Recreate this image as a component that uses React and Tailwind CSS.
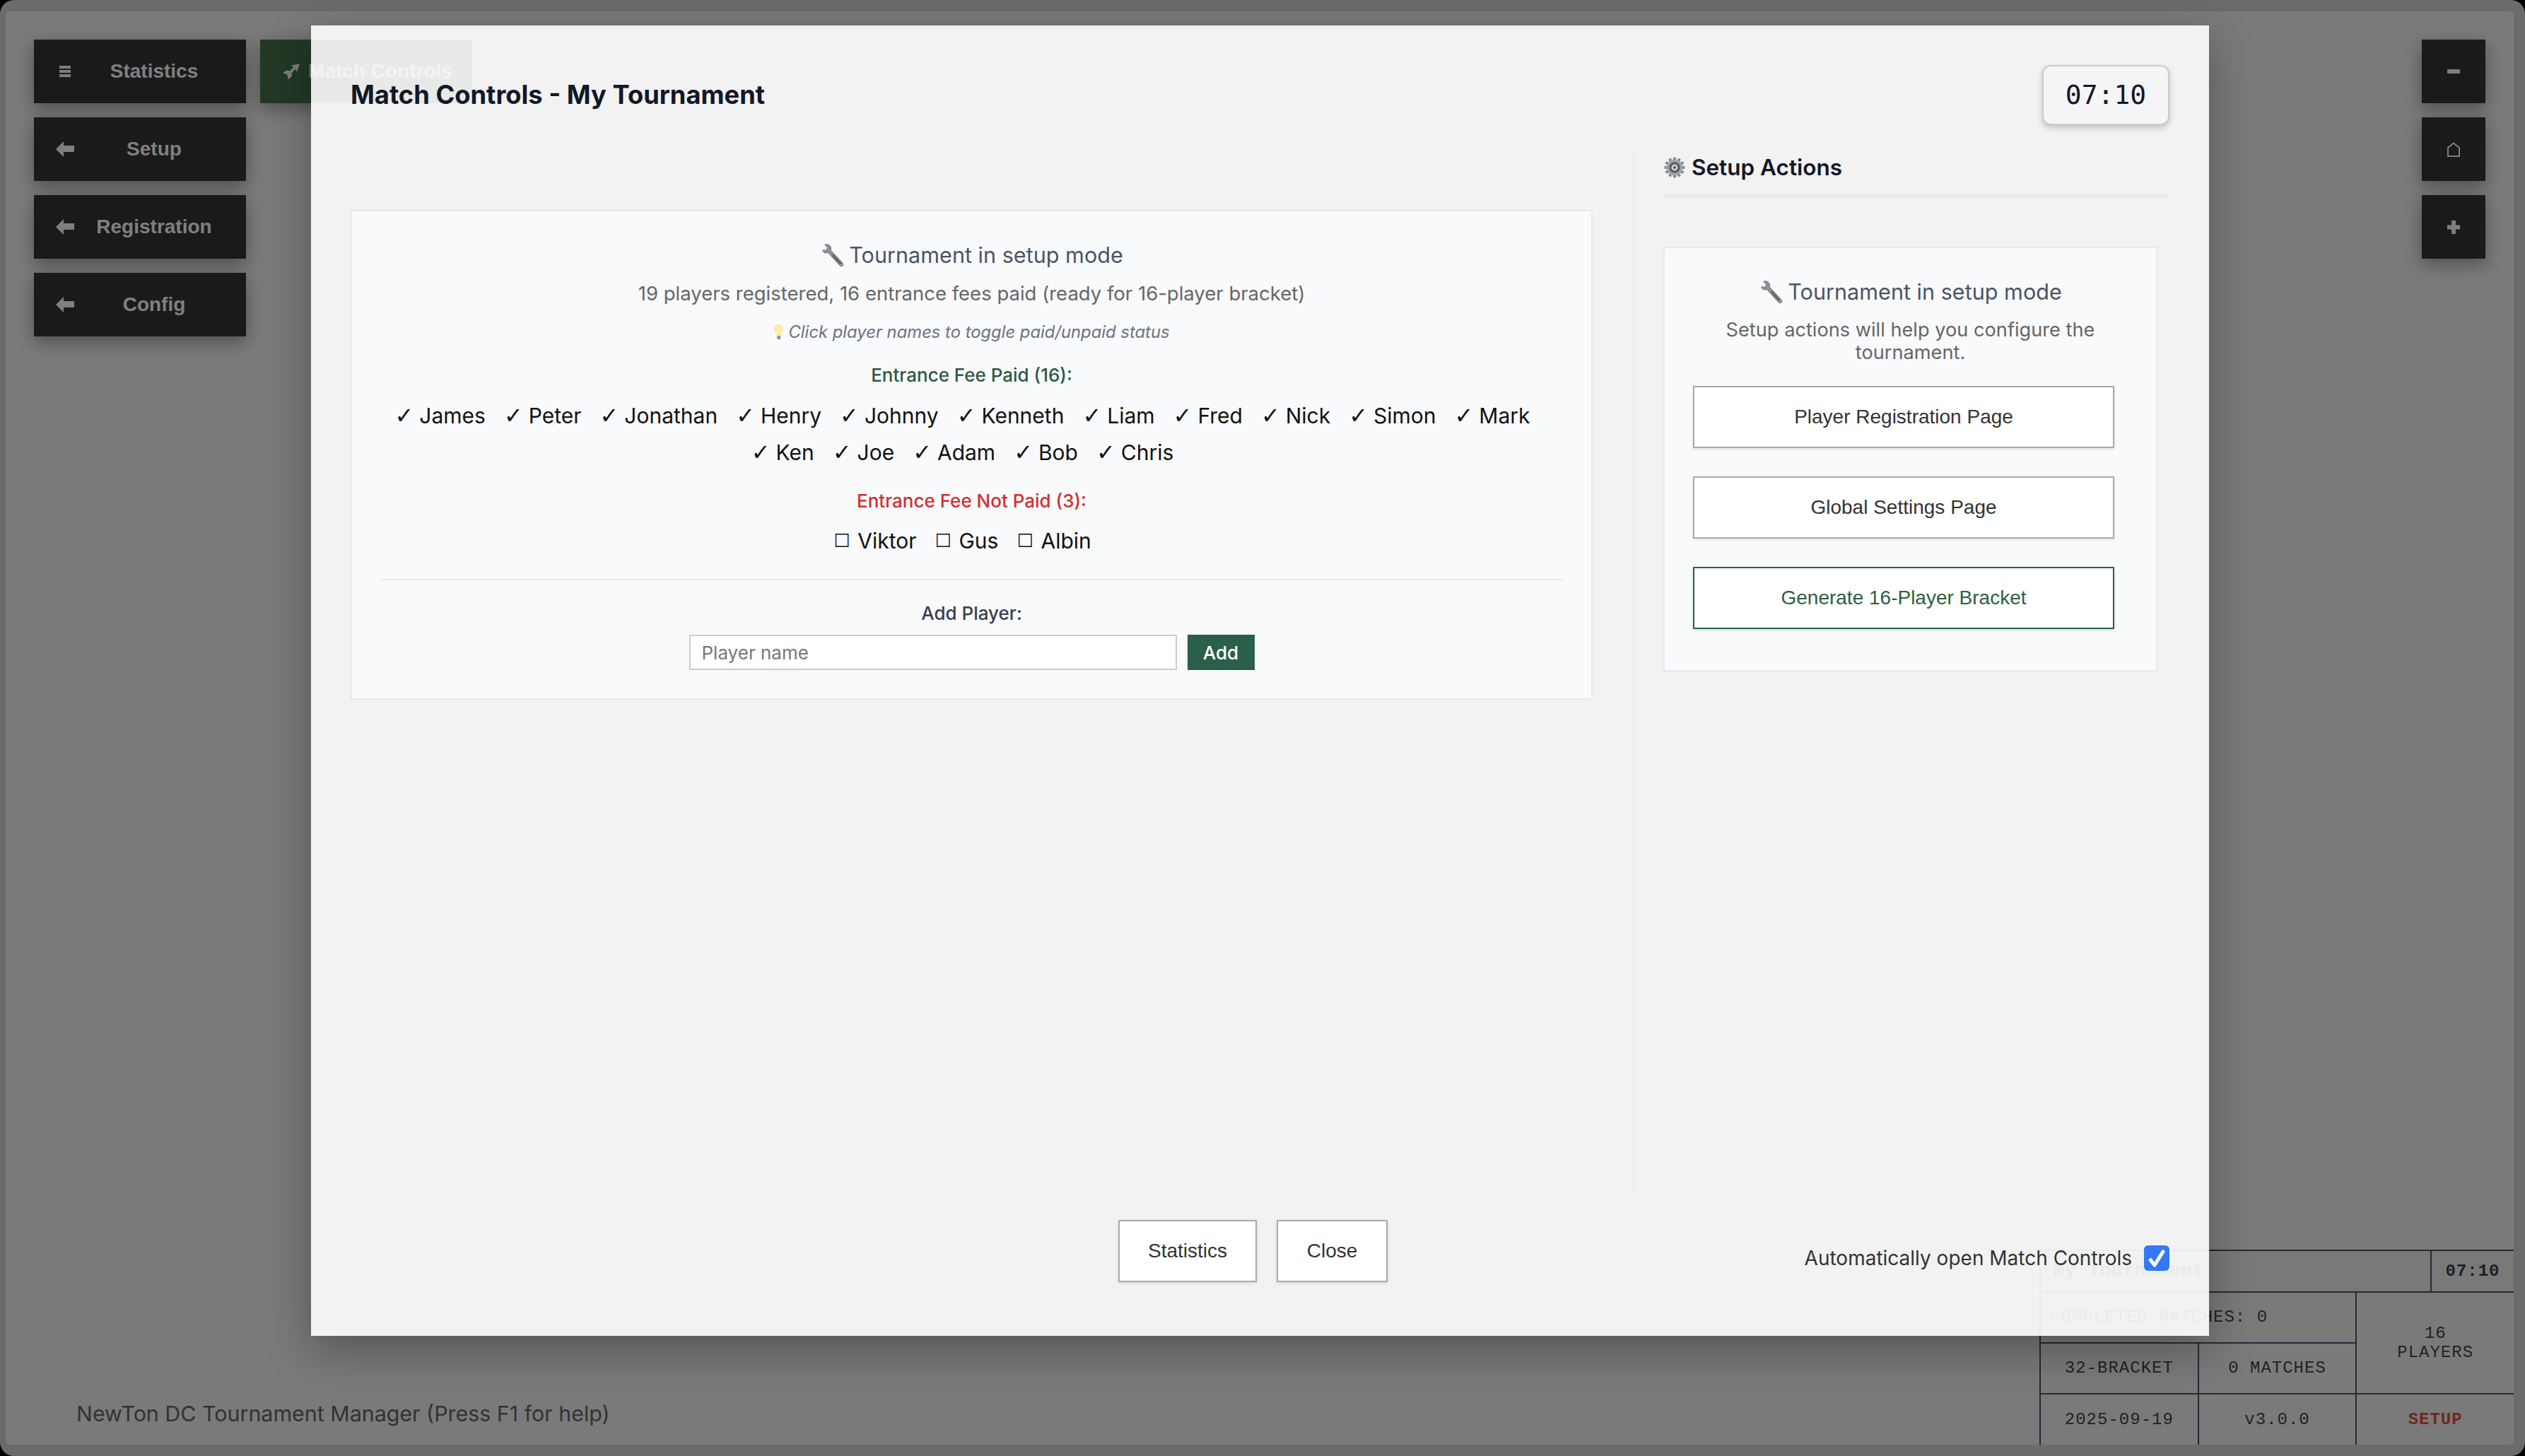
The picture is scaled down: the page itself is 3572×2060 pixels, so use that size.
import React from "react";

const paid = ["James","Peter","Jonathan","Henry","Johnny","Kenneth","Liam","Fred","Nick","Simon","Mark","Ken","Joe","Adam","Bob","Chris"];
const unpaid = ["Viktor","Gus","Albin"];

function Wrench({ className }) {
  return (
    <svg viewBox="0 0 32 32" className={className}>
      <path d="M3.5 9.5 L8 10 L9.5 6.5 L6 3 C9 1.6 12.6 3 13.6 6 C14 7.6 13.8 8.6 13.4 9.6 L28.6 26 C29.6 27.2 29.4 28.6 28.4 29.5 C27.4 30.3 26 30.2 25 29.2 L10 12.8 C8.6 13.4 7 13.4 5.6 12.8 C4 12 3.2 10.8 3.5 9.5 Z" fill="#8d9096" stroke="#6b6e74" strokeWidth="0.8" />
      <path d="M17 15 L28 27 C28.8 28 28 29.4 26.6 29 L15.2 16.6 Z" fill="#7a5a58" />
      <circle cx="27" cy="27.8" r="1" fill="#d8d8da" />
    </svg>
  );
}

function Gear({ className }) {
  const teeth = Array.from({ length: 12 }, (_, i) => i * 30);
  return (
    <svg viewBox="0 0 32 32" className={className}>
      {teeth.map((a) => (
        <rect key={a} x="14" y="1.5" width="4" height="6" rx="1" fill="#85888e" transform={`rotate(${a} 16 16)`} />
      ))}
      <circle cx="16" cy="16" r="11.5" fill="#a2a5ab" />
      <circle cx="16" cy="16" r="7.8" fill="#5d6067" />
      <circle cx="16" cy="16" r="4.4" fill="#d9dade" />
      <circle cx="16" cy="16" r="2" fill="#4a4c52" />
    </svg>
  );
}

function Bulb({ className }) {
  return (
    <svg viewBox="0 0 20 32" className={className}>
      <path d="M10 2 C15 2 18 5.6 18 10 C18 14 15 16 14 22 L6.5 22 C6 16 2 14 2 10 C2 5.6 5 2 10 2 Z" fill="#fdeea6" stroke="#efd98a" strokeWidth="0.8" />
      <path d="M6.8 23 L13.8 23 L13.4 27 L11.6 29.5 L9 29.5 L7.2 27 Z" fill="#8f8f8f" />
    </svg>
  );
}

const BarsIcon = () => (
  <svg viewBox="0 0 24 24" className="h-[24px] w-[24px]" fill="#fff">
    <rect x="4" y="4" width="16" height="4" />
    <rect x="4" y="10" width="16" height="4" />
    <rect x="4" y="16" width="16" height="4" />
  </svg>
);
const ArrowIcon = () => (
  <svg viewBox="0 0 26 22" className="h-[22px] w-[26px] overflow-visible" fill="#fff">
    <path d="M0 11 L11 0 L11 6 L26 6 L26 15 L11 15 L11 22 Z" />
  </svg>
);
const SendIcon = () => (
  <svg viewBox="0 0 24 24" className="h-[24px] w-[24px]" fill="#fff">
    <path d="M24 1 L20 13 L17.8 8.6 L12.5 14.5 L13 18.5 L8 23.5 L6.5 17 L0 13.5 L6 10.5 L9.8 11.5 L15.4 6.2 L12 3.5 Z" />
  </svg>
);
const MinusIcon = () => (
  <svg viewBox="0 0 18 6" className="h-[6px] w-[18px]" fill="#fff"><rect width="18" height="6" rx="1" /></svg>
);
const HomeIcon = () => (
  <svg viewBox="0 0 18 21" className="h-[21px] w-[18px]" fill="none" stroke="#fff" strokeWidth="2"><path d="M1 20 L17 20 L17 8 L9 1.5 L1 8 Z" /></svg>
);
const PlusIcon = () => (
  <svg viewBox="0 0 18 19" className="h-[19px] w-[18px]" fill="#fff"><path d="M6 0 H12 V6.5 H18 V12.5 H12 V19 H6 V12.5 H0 V6.5 H6 Z" /></svg>
);

function NavButton({ icon, label, green }) {
  return (
    <div className={`flex h-[90px] w-[300px] items-center pl-[32px] pr-[32px] shadow-[0_8px_24px_rgba(0,0,0,0.35)] ${green ? "bg-[#44724c]" : "bg-[#343434]"}`}>
      <span className="flex w-[24px] justify-center">{icon}</span>
      <span className="ml-[16px] flex min-w-0 flex-1 justify-center font-['Liberation_Sans',sans-serif] text-[28px] font-bold text-white">
        <span className="whitespace-nowrap">{label}</span>
      </span>
    </div>
  );
}

function SideButton({ children }) {
  return (
    <div className="flex h-[90px] w-[90px] items-center justify-center bg-[#343434] shadow-[0_8px_24px_rgba(0,0,0,0.35)]">
      {children}
    </div>
  );
}

const cell = "flex items-center justify-center border-l-2 border-t-2 border-[#4a5563] text-center";

function InfoTable() {
  return (
    <div className="grid h-[276px] w-[671px] grid-cols-3 grid-rows-[59px_72px_72px_73px] font-['Liberation_Mono',monospace] text-[24px] tracking-[1px] text-[#444]">
      <div className="col-span-3 flex border-l-2 border-t-2 border-[#4a5563] bg-[#f0f3f0]">
        <div className="flex flex-1 items-center whitespace-nowrap pl-[18px] text-[26px] font-bold tracking-[0.8px]">My Tournament</div>
        <div className="flex w-[118px] items-center justify-center border-l-2 border-[#4a5563] font-bold text-[#374151]">07:10</div>
      </div>
      <div className={`${cell} col-span-2 justify-start pl-[13px]`}>COMPLETED MATCHES: 0</div>
      <div className={`${cell} row-span-2 leading-[27px]`}>16<br />PLAYERS</div>
      <div className={cell}>32-BRACKET</div>
      <div className={cell}>0 MATCHES</div>
      <div className={cell}>2025-09-19</div>
      <div className={cell}>v3.0.0</div>
      <div className={`${cell} font-bold text-[#e74c3c]`}>SETUP</div>
    </div>
  );
}

function Name({ mark, children }) {
  return (
    <span className="mr-[26px] inline-flex items-center text-[30px] leading-[52px] text-[#111]">
      {mark === "box" ? (
        <span className="w-[34px] text-left font-['DejaVu_Sans',sans-serif] text-[26px] leading-none">☐</span>
      ) : (
        <span className="mr-[8px] font-['DejaVu_Sans',sans-serif] text-[32px] leading-none">✓</span>
      )}
      {children}
    </span>
  );
}

function ActionButton({ children, green }) {
  return (
    <div className={`flex h-[88px] w-[596px] items-center justify-center border-2 bg-white font-['Liberation_Sans',sans-serif] text-[28px] shadow-[0_2px_4px_rgba(0,0,0,0.1)] ${green ? "border-[#2d5f3d] text-[#2d5f3d]" : "border-[#aaaaaa] text-[#333]"}`}>
      {children}
    </div>
  );
}

export default function App() {
  return (
    <div className="relative h-[2060px] w-[3572px] overflow-hidden bg-black font-['Inter',sans-serif]">
      <div className="h-full w-full rounded-[20px] bg-[#d4d6da] pb-[16px] pl-[8px] pr-[16px] pt-[16px]">
        <div className="flex h-full w-full flex-col justify-between rounded-[6px] bg-[#f5f5f5]">
          <div className="flex items-start justify-between pl-[40px] pr-[40px] pt-[40px]">
            <div className="flex gap-[20px]">
              <div className="flex flex-col gap-[20px]">
                <NavButton icon={<BarsIcon />} label="Statistics" />
                <NavButton icon={<ArrowIcon />} label="Setup" />
                <NavButton icon={<ArrowIcon />} label="Registration" />
                <NavButton icon={<ArrowIcon />} label="Config" />
              </div>
              <NavButton green icon={<SendIcon />} label="Match Controls" />
            </div>
            <div className="flex flex-col gap-[20px]">
              <SideButton><MinusIcon /></SideButton>
              <SideButton><HomeIcon /></SideButton>
              <SideButton><PlusIcon /></SideButton>
            </div>
          </div>
          <div className="flex items-end justify-between">
            <div className="pb-[24px] pl-[100px] text-[30.4px] leading-[40px] text-[#666]">NewTon DC Tournament Manager (Press F1 for help)</div>
            <InfoTable />
          </div>
        </div>
      </div>

      {/* overlay + modal */}
      <div className="absolute inset-0 bg-black/50">
        <div className="relative ml-[440px] mt-[36px] flex h-[1854px] w-[2685px] flex-col overflow-hidden bg-[#f2f2f2] px-[56px] pt-[56px] shadow-[0_20px_60px_rgba(0,0,0,0.3)]">
          <div aria-hidden="true" className="pointer-events-none absolute left-[-72px] top-[20px] flex h-[90px] w-[300px] items-center bg-[#44724c]/[0.06] pl-[72px] pr-[32px]">
            <span className="flex min-w-0 flex-1 justify-center font-['Liberation_Sans',sans-serif] text-[28px] font-bold text-white/50">
              <span className="whitespace-nowrap">Match Controls</span>
            </span>
          </div>
          <div aria-hidden="true" className="pointer-events-none absolute left-[2445px] top-[1732px] opacity-[0.04]">
            <InfoTable />
          </div>

          <div className="relative flex h-[85px] items-center justify-between">
            <h1 className="text-[36.3px] font-bold text-[#111827]">Match Controls - My Tournament</h1>
            <div className="flex h-[85px] w-[180px] items-center justify-center rounded-[12px] border-2 border-[#cccccc] bg-[#f5f5f5] font-['DejaVu_Sans_Mono',monospace] text-[38px] text-[#111827] shadow-[0_4px_8px_rgba(0,0,0,0.2)]">
              07:10
            </div>
          </div>

          <div className="relative mt-[40px] flex h-[1469px]">
            <div className="w-[1757px] pt-[80px]">
              <div className="flex h-[693px] flex-col items-center border-2 border-[#e8e8ee] bg-[#f9fafc] px-[40px] pt-[38px] text-center">
                <div className="flex h-[48px] items-center text-[30.6px] text-[#4b5563]">
                  <Wrench className="mr-[5px] h-[36px] w-[36px]" />Tournament in setup mode
                </div>
                <div className="mt-[10px] h-[40px] text-[27.5px] leading-[40px] text-[#666]">19 players registered, 16 entrance fees paid (ready for 16-player bracket)</div>
                <div className="mt-[20px] flex h-[30px] items-center text-[23.8px] italic text-[#6b7280]">
                  <Bulb className="mr-[6px] h-[24px] w-[15px]" />Click player names to toggle paid/unpaid status
                </div>
                <div className="mt-[30px] h-[32px] text-[26px] font-medium leading-[32px] text-[#2d5a3d]">Entrance Fee Paid (16):</div>
                <div className="mt-[15px] w-full">
                  {paid.map((n) => (
                    <Name key={n} mark="check">{n}</Name>
                  ))}
                </div>
                <div className="mt-[27px] h-[32px] text-[26px] font-medium leading-[32px] text-[#d32f2f]">Entrance Fee Not Paid (3):</div>
                <div className="mt-[14px] w-full">
                  {unpaid.map((n) => (
                    <Name key={n} mark="box">{n}</Name>
                  ))}
                </div>
                <div className="mt-[28px] h-[2px] w-full bg-[#e8e8ee]" />
                <div className="mt-[31px] h-[32px] text-[26px] font-medium leading-[32px] text-[#374151]">Add Player:</div>
                <div className="mt-[14px] flex gap-[15px]">
                  <div className="flex h-[50px] w-[690px] items-center border-2 border-[#cccccc] bg-white px-[16px] text-[26px] text-[#777]">Player name</div>
                  <div className="flex h-[50px] w-[95px] items-center justify-center bg-[#2a6049] text-[26px] font-medium text-white">Add</div>
                </div>
              </div>
            </div>
            <div className="ml-[57px] flex flex-1 flex-col border-l-2 border-[#e8e8ee] pl-[41px]">
              <div className="flex h-[62px] w-[716px] items-start border-b-4 border-[#e8e8ee] pb-0">
                <Gear className="mr-[8px] mt-[4px] h-[32px] w-[32px]" />
                <span className="text-[31.5px] font-semibold leading-[40px] text-[#111827]">Setup Actions</span>
              </div>
              <div className="mt-[70px] flex h-[601px] w-[699px] flex-col border-2 border-[#e8e8ee] bg-[#f9fafc] px-[40px] pt-[40px]">
                <div className="flex h-[44px] items-center justify-center text-[30.6px] text-[#4b5563]">
                  <Wrench className="mr-[5px] h-[36px] w-[36px]" />Tournament in setup mode
                </div>
                <div className="mt-[16px] text-center text-[27.2px] leading-[32px] text-[#666]">Setup actions will help you configure the tournament.</div>
                <div className="mt-[31px] flex flex-col gap-[40px]">
                  <ActionButton>Player Registration Page</ActionButton>
                  <ActionButton>Global Settings Page</ActionButton>
                  <ActionButton green>Generate 16-Player Bracket</ActionButton>
                </div>
              </div>
            </div>
          </div>

          <div className="relative mt-[40px] flex items-start">
            <div className="ml-[1086px] flex gap-[28px]">
              <div className="flex h-[88px] w-[196px] items-center justify-center border-2 border-[#aaaaaa] bg-white font-['Liberation_Sans',sans-serif] text-[28px] text-[#333] shadow-[0_2px_4px_rgba(0,0,0,0.1)]">Statistics</div>
              <div className="flex h-[88px] w-[157px] items-center justify-center border-2 border-[#aaaaaa] bg-white font-['Liberation_Sans',sans-serif] text-[28px] text-[#333] shadow-[0_2px_4px_rgba(0,0,0,0.1)]">Close</div>
            </div>
            <div className="ml-auto mt-[36px] flex items-center gap-[17px]">
              <span className="text-[28px] leading-[36px] text-[#333]">Automatically open Match Controls</span>
              <span className="flex h-[36px] w-[36px] items-center justify-center rounded-[6px] bg-[#3478f6]">
                <svg viewBox="0 0 36 36" className="h-[36px] w-[36px]"><path d="M8 19 L15 28 L28 7" fill="none" stroke="#fff" strokeWidth="5" strokeLinejoin="round" /></svg>
              </span>
            </div>
          </div>
        </div>
      </div>
    </div>
  );
}
